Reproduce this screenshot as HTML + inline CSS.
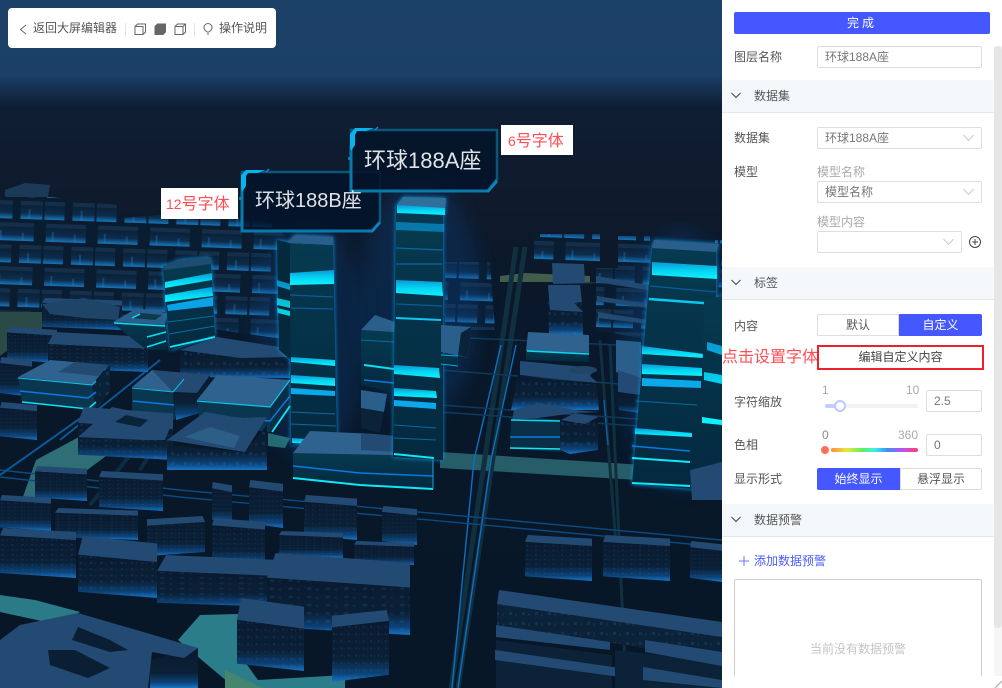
<!DOCTYPE html>
<html lang="zh-CN"><head><meta charset="utf-8"><title>3D</title>
<style>
*{box-sizing:border-box}
html,body{margin:0;padding:0;width:1002px;height:688px;overflow:hidden;background:#fff;font-family:"Liberation Sans","Noto Sans CJK SC",sans-serif;font-size:12px;color:#555}
.a{position:absolute;white-space:nowrap}
#city{position:absolute;left:0;top:0}
.lb{line-height:16px}
.in{position:absolute;border:1px solid #ddd;border-radius:2px;background:#fff;height:22px;line-height:20px;padding-left:7px;color:#777}
.sec{position:absolute;left:722px;width:272px;height:33px;background:#f5f8fb;border-bottom:1px solid #e4e8ee}
.sec span{position:absolute;left:32px;top:8px;line-height:16px;color:#555}
.sec svg{position:absolute;left:9px;top:11px}
.chev{position:absolute;right:7px;top:6px}
.tg{position:absolute;text-align:center;line-height:20px;height:22px;border:1px solid #ddd;background:#fff;color:#555}
.on{background:#4557ff;border-color:#4557ff;color:#fff}
.g{color:#aaa}
.glow{filter:drop-shadow(0 0 2px #0a9ae8)}
</style></head><body>
<svg id="city" width="722" height="688" viewBox="0 0 722 688" xmlns="http://www.w3.org/2000/svg">
<defs>
<linearGradient id="sky" x1="0" y1="0" x2="0" y2="1"><stop offset="0" stop-color="#1c4169"/><stop offset=".11" stop-color="#1b3f67"/><stop offset=".13" stop-color="#15304f"/><stop offset=".155" stop-color="#0f1e33"/><stop offset=".3" stop-color="#0f1a2c"/><stop offset=".45" stop-color="#09182a"/><stop offset="1" stop-color="#071727"/></linearGradient>
<linearGradient id="w" x1="0" y1="0" x2="0" y2="1"><stop offset="0" stop-color="#0a1a30"/><stop offset=".62" stop-color="#0a2036"/><stop offset=".86" stop-color="#0d4278"/><stop offset="1" stop-color="#1874c4"/></linearGradient>
<linearGradient id="fw" x1="0" y1="0" x2="0" y2="1"><stop offset="0" stop-color="#0b2036"/><stop offset=".6" stop-color="#0c2c4c"/><stop offset="1" stop-color="#1877bb"/></linearGradient>
<linearGradient id="tw" x1="0" y1="0" x2="0" y2="1"><stop offset="0" stop-color="#063a50"/><stop offset="1" stop-color="#04293f"/></linearGradient>
<linearGradient id="cy" x1="0" y1="0" x2="0" y2="1"><stop offset="0" stop-color="#0a96d8"/><stop offset=".5" stop-color="#05d4f0"/><stop offset="1" stop-color="#10f2ff"/></linearGradient>
<pattern id="p" width="13" height="10" patternUnits="userSpaceOnUse"><rect x="2" y="2" width="3" height="3" fill="#2f8ad0" opacity=".16"/><rect x="8" y="3" width="2" height="3" fill="#2f8ad0" opacity=".1"/></pattern>
<pattern id="far" width="52" height="44" patternUnits="userSpaceOnUse" patternTransform="rotate(2)">
<rect width="52" height="44" fill="#0a1c30"/>
<rect x="2" y="5" width="40" height="15" fill="url(#fw)"/><rect x="2" y="2" width="40" height="4" fill="#152f4a"/>
<rect x="28" y="27" width="22" height="15" fill="url(#fw)"/><rect x="28" y="24" width="22" height="4" fill="#152f4a"/>
<rect x="0" y="27" width="20" height="15" fill="url(#fw)"/><rect x="0" y="24" width="20" height="4" fill="#152f4a"/>
<rect x="8" y="10" width="2" height="9" fill="#2a8ad8" opacity=".3"/><rect x="30" y="12" width="2" height="7" fill="#2a8ad8" opacity=".3"/><rect x="36" y="32" width="2" height="9" fill="#2a8ad8" opacity=".3"/></pattern>
<g id="h"><path fill="url(#w)" d="M0 15 100 24V100L0 90z"/><path fill="url(#p)" d="M0 15 100 24V100L0 90z"/><path fill="#234a72" d="M4 0 100 8V24L0 15z"/></g>
<g id="k"><path fill="url(#w)" d="M0 24 100 15V90L0 100z"/><path fill="url(#p)" d="M0 24 100 15V90L0 100z"/><path fill="#234a72" d="M0 8 96 0 100 15 0 24z"/></g>
<g id="n"><path fill="url(#w)" d="M0 30 100 42V100L0 90z"/><path fill="url(#p)" d="M0 30 100 42V100L0 90z"/><path fill="#234a72" d="M6 0 100 12V42L0 30z"/></g>
<filter id="bl" x="-50%" y="-50%" width="200%" height="200%"><feGaussianBlur stdDeviation="9"/></filter>
</defs>
<rect width="722" height="688" fill="url(#sky)"/>
<!-- far city -->
<path fill="#1a3a58" d="M5 190 25 183 50 185 48 197 5 197z"/>
<path fill="url(#far)" d="M0 197 50 197 118 205 120 218 200 212 270 222 290 240 290 340 150 320 40 310 0 325z"/>
<path fill="url(#far)" d="M445 262 490 262 495 330 445 330z"/>
<path fill="url(#far)" d="M534 234 600 234 600 262 534 262z"/>
<path fill="url(#far)" d="M618 236 650 236 650 268 618 268z"/>
<path fill="url(#far)" d="M596 268 650 268 650 340 596 330z"/>
<path fill="url(#far)" d="M715 240 722 240 722 300 715 300z"/>
<!-- ground patches -->
<path fill="#2a4a48" d="M0 312 42 312 42 335 8 350 0 356z"/>
<path fill="#2a7a88" d="M0 595 35 600 80 612 60 625 0 612z"/>
<path fill="#2b7d8a" d="M200 615 238 614 240 655 258 680 345 675 345 688 235 688 178 640z"/>
<path fill="#47866e" d="M225 670 262 688 225 688z"/>
<path fill="#3c8c90" d="M36 460 120 415 155 420 60 490 20 505z" opacity=".75"/>
<path fill="#3a8c92" d="M440 452 722 470 722 485 440 468z" opacity=".6"/>
<path fill="#5b7a5c" d="M500 276 525 273 590 276 590 282 500 282z" opacity=".7"/>
<!-- roads -->
<g fill="none">
<path stroke="#10303f" stroke-width="5" d="M516 247 451 688M525 247 458 688"/>
<path stroke="#0e6fc4" stroke-width="1.4" d="M501 345 474 460 452 688M516 345 491 460 458 688"/>
<path stroke="#10303f" stroke-width="3" d="M600 340 618 570M610 345 626 688"/>
<path stroke="#0d5fa8" stroke-width="1.4" d="M604 400 608 445"/>
<path stroke="#103a5c" stroke-width="1.5" d="M470 338 722 350M440 370 722 392M440 405 722 425M440 412 722 432"/>
<path stroke="#0c4a82" stroke-width="1.4" d="M0 470 180 490 722 540M0 477 180 497 722 547"/>
<path stroke="#0d5797" stroke-width="2" d="M0 475 85 415M60 440 160 360"/>
<path stroke="#0d2c44" stroke-width="4" d="M112 350 70 395M140 470 180 405M90 505 130 455"/>
</g>
<ellipse cx="420" cy="300" rx="60" ry="120" fill="#0a4a90" opacity=".28" filter="url(#bl)"/>
<ellipse cx="310" cy="340" rx="55" ry="120" fill="#0a4a90" opacity=".25" filter="url(#bl)"/>
<ellipse cx="680" cy="360" rx="60" ry="130" fill="#0a4a90" opacity=".28" filter="url(#bl)"/>
<!-- mid left -->
<use href="#h" transform="matrix(.8 0 0 .32 42 298)"/>
<use href="#h" transform="matrix(.5 0 0 .36 7 327)"/>
<path fill="#1e4468" d="M42 304 84 298 120 307 118 320 84 318 50 314z"/>
<use href="#n" transform="matrix(1 0 0 .4 48 332)"/>
<use href="#h" transform="matrix(.32 0 0 .4 0 357)"/>
<use href="#h" transform="matrix(.37 0 0 .38 0 402)"/>
<!-- M4 lit -->
<path fill="url(#tw)" d="M113 323 167 325 166 350 147 350 130 337z"/>
<path fill="#2a5f8c" d="M113 322 137 308 167 313 165 325z"/>
<path fill="#0d3a4d" d="M132 318 140 313 162 315 155 320z"/>
<path stroke="#08e0f5" stroke-width="1.5" fill="none" d="M114 323 165 326M132 318 140 314M147 337 166 332M147 347 166 341"/>
<!-- tower C -->
<g class="glow">
<path fill="url(#tw)" d="M163 268 211 262 215 335 170 350z"/>
<path fill="#1e4d72" d="M163 266 180 260 210 257 211 264 164 270z"/>
<path fill="url(#cy)" d="M165 282 212 273 212 280 165 288z"/>
<path fill="url(#cy)" d="M165 295 212 287 213 296 165 302z"/>
<path fill="#0ba2e6" d="M167 305 213 297 213 306 168 311z"/>
<path stroke="#0a6a9c" fill="none" d="M168 322 214 316M169 334 215 326"/>
<path stroke="#10e8f8" stroke-width="1.8" fill="none" d="M170 347 215 337"/>
</g>
<!-- M3/M8 etc -->
<path fill="url(#w)" d="M180 350 290 357 290 378 180 377z"/>
<path fill="url(#p)" d="M180 350 290 357 290 378 180 377z"/>
<path fill="#234a72" d="M180 350 217 337 280 347 290 357 240 358z"/>
<!-- M5 -->
<path fill="#0b3650" d="M18 377 92 385 96 410 22 402z"/>
<path fill="#0a2238" d="M92 385 110 365 110 392 96 410z"/>
<path fill="url(#p)" d="M92 385 110 365 110 392 96 410z"/>
<path fill="#2f628e" d="M18 377 50 360 108 365 92 385z"/>
<path fill="#234a72" d="M58 372 75 362 108 365 98 376z"/>
<path stroke="#0bc8ea" stroke-width="1" fill="none" d="M18 378 92 385 96 381"/>
<path stroke="#0d78e0" stroke-width="1.5" fill="none" d="M20 391 88 398 96 392"/>
<path stroke="#0de4f4" stroke-width="1.5" fill="none" d="M22 402 88 409 96 402"/>
<!-- M6 -->
<path fill="#0b3650" d="M132 388 173 393 175 420 132 412z"/>
<path fill="url(#w)" d="M173 393 197 393 210 375 210 410 176 420z"/>
<path fill="#2f628e" d="M132 387 152 370 184 373 173 392z"/>
<path fill="#234a72" d="M152 370 210 375 197 393 173 392z"/>
<path stroke="#0bc0e6" fill="none" d="M132 388 173 392 184 379"/>
<path stroke="#0d78e0" stroke-width="1.5" fill="none" d="M133 401 174 405"/>
<!-- M7 -->
<path fill="#0b3650" d="M197 401 270 407 270 432 200 425z"/>
<path fill="#0a2d48" d="M270 407 290 380 290 410 270 432z"/>
<path fill="#2f628e" d="M197 400 217 375 290 380 270 407z"/>
<path stroke="#0bc8ea" fill="none" stroke-width="1.2" d="M197 401 270 407 290 380"/>
<path stroke="#0d78e0" stroke-width="1.5" fill="none" d="M211 416 270 421 290 396"/>
<path stroke="#10e8f8" stroke-width="1.8" fill="none" d="M212 426 248 430M272 432 290 406"/>
<!-- M9 -->
<use href="#n" transform="matrix(.95 0 0 .53 78 407)"/>
<path fill="#234a72" d="M78 437 112 407 173 420 165 440 145 440z"/>
<path fill="#0b2338" d="M115 422 126 415 148 420 140 427z"/>
<!-- M10 -->
<path fill="url(#w)" d="M167 445 245 452 267 425 267 470 167 470z"/>
<path fill="url(#p)" d="M167 445 245 452 267 425 267 470 167 470z"/>
<path fill="#234a72" d="M167 440 205 412 240 418 267 417 245 452z"/>
<path fill="#2c5e88" d="M184 437 210 427 240 436 234 448z"/>
<path fill="#37a0a0" d="M268 433 290 438 285 448 268 446z" opacity=".6"/>
<!-- tower B -->
<g class="glow">
<path fill="#05293c" d="M277 240 290 243 291 360 279 350z"/>
<path fill="url(#tw)" d="M290 243 333 245 337 440 291 445z"/>
<path fill="#2a5f8c" d="M288 243 295 235 333 237 333 245z"/>
<path fill="url(#cy)" d="M290 273 334 270 334 284 290 285z"/>
<path stroke="#0c5a9c" stroke-width="1.2" fill="none" d="M290 295 333 297M291 308 333 309"/>
<path fill="url(#cy)" d="M291 357 335 360 335 366 291 362z"/>
<path fill="url(#cy)" d="M291 375 335 378 335 386 291 383z"/>
<path fill="#0ba8ea" d="M291 388 335 391 335 396 291 394z"/>
<path stroke="#0a6a9c" fill="none" d="M291 412 335 414M291 424 336 426"/>
<path fill="url(#cy)" d="M292 438 336 441 336 446 292 443z"/>
<path fill="url(#cy)" d="M277 280 290 284 290 290 277 286zM277 298 290 301 290 308 277 305zM277 308 290 311 290 316 278 313z" opacity=".85"/>
</g>
<!-- podium -->
<path fill="url(#tw)" d="M293 452 433 456 433 490 293 478z"/>
<path fill="#2f628e" d="M293 453 310 431 375 434 433 440 433 456z"/>
<path stroke="#0d78e0" stroke-width="1.5" fill="none" d="M293 466 360 473 433 476"/>
<path stroke="#10e8f8" stroke-width="2" fill="none" d="M293 478 360 485 433 489"/>
<path stroke="#10a8d8" fill="none" d="M433 458 433 489"/>
<!-- cluster left of tower A -->
<path fill="url(#tw)" d="M361 330 394 332 394 393 361 385z"/>
<path fill="#2a5f8c" d="M361 330 375 315 395 322 394 332z"/>
<path stroke="#0a6a9c" fill="none" d="M361 340 394 342"/>
<path stroke="#0ce0f4" stroke-width="2" fill="none" d="M364 365 394 369"/>
<path stroke="#0d78e0" stroke-width="1.5" fill="none" d="M364 380 394 383"/>
<path fill="#2a5f8c" d="M361 390 387 394 384 412 361 408z"/>
<path fill="#0b2338" d="M361 408 384 412 380 433 361 428z"/>
<path fill="#234a72" d="M361 433 395 436 395 452 361 450z"/>
<!-- tower A -->
<g class="glow">
<path fill="url(#tw)" d="M396 205 443 208 443 460 393 457z"/>
<path fill="#2f6f9a" d="M397 205 403 197 446 198 445 208z"/>
<path fill="url(#cy)" d="M397 205 445 208 445 215 397 213z"/>
<path fill="#0aa2e6" d="M396 222 444 224 444 232 396 230z" opacity=".6"/>
<path stroke="#0a6a9c" stroke-width="1.2" fill="none" d="M396 248 443 250M396 264 442 264"/>
<path fill="url(#cy)" d="M396 280 442 282 443 296 396 293z"/>
<path stroke="#0c5a9c" stroke-width="1.2" fill="none" d="M396 304 442 306"/>
<path stroke="#0cc8f0" stroke-width="2" fill="none" d="M396 318 441 320"/>
<path fill="url(#cy)" d="M394 365 439 368 440 378 394 374z"/>
<path fill="url(#cy)" d="M394 388 436 391 437 398 394 396z"/>
<path fill="#0ba8ea" d="M394 400 436 403 436 409 394 406z"/>
<path stroke="#0a6a9c" fill="none" d="M394 425 436 428M394 438 436 440"/>
<path stroke="#10e8f8" stroke-width="2" fill="none" d="M394 454 434 458"/>
</g>
<!-- R-d -->
<path fill="#2a5f8c" d="M441 325 471 327 468 358 441 352z"/>
<path fill="#0b2338" d="M461 333 471 327 468 358 458 355z"/>
<path fill="url(#tw)" d="M441 354 458 356 458 366 441 364z"/>
<path stroke="#0ba8e0" fill="none" d="M441 355 458 356M441 364 458 366"/>
<!-- center -->
<path fill="#234a72" d="M552 263 584 264 585 282 600 283 553 284z"/>
<path fill="url(#w)" d="M548 300 583 302 583 335 549 333z"/>
<path fill="url(#p)" d="M548 300 583 302 583 335 549 333z"/>
<path fill="#234a72" d="M548 285 580 285 582 302 574 303 583 312 550 310z"/>
<path fill="#2f628e" d="M528 332 589 335 589 353 526 351z"/>
<path fill="url(#tw)" d="M526 351 589 354 589 362 526 360z"/>
<path stroke="#0bd8f0" stroke-width="1.4" fill="none" d="M527 351 589 354"/>
<path fill="url(#w)" d="M518 375 597 385 599 410 511 410z"/>
<path fill="url(#p)" d="M518 375 597 385 599 410 511 410z"/>
<path fill="#234a72" d="M520 361 595 368 590 376 598 383 520 375z"/>
<ellipse cx="583" cy="370" rx="14" ry="4" fill="#1f4568"/>
<path fill="#0b2f46" d="M511 420 561 420 561 452 510 449z"/>
<path fill="#234a72" d="M514 410 540 403 575 410 599 412 575 413 538 418 512 420z"/>
<path stroke="#0ad8f0" stroke-width="1.4" fill="none" d="M511 420 560 421"/>
<path stroke="#0d78e0" stroke-width="1.5" fill="none" d="M510 437 560 437"/>
<path stroke="#10e8f8" stroke-width="1.5" fill="none" d="M510 448 560 449"/>
<path fill="url(#w)" d="M560 420 598 418 598 450 570 454 560 450z"/>
<path fill="url(#p)" d="M560 420 598 418 598 450 570 454 560 450z"/>
<path fill="#234a72" d="M561 420 575 413 598 417 585 424z"/>
<!-- mid right -->
<path fill="#2a5f8c" d="M616 340 641 342 641 380 616 372z"/>
<path fill="#234a72" d="M618 370 641 378 640 395 618 392z"/>
<path fill="url(#w)" d="M617 392 640 395 640 413 619 410z"/>
<path fill="#234a72" d="M596 276 648 285 648 290 596 282zM597 296 648 304 648 308 597 301zM598 312 648 320 648 324 598 318z"/>
<!-- right tower -->
<g class="glow">
<path fill="url(#tw)" d="M652 248 716 250 716 430 707 490 632 484z"/>
<path fill="#2a5f8c" d="M654 240 719 244 716 252 652 248z"/>
<path fill="url(#cy)" d="M652 262 717 266 717 279 652 275z"/>
<path stroke="#0c5a9c" stroke-width="1.2" fill="none" d="M650 286 716 292"/>
<path stroke="#0cc8f0" stroke-width="2.4" fill="none" d="M649 299 716 304"/>
<path fill="url(#cy)" d="M642 346 704 354 704 358 642 354z"/>
<path fill="url(#cy)" d="M642 364 702 368 702 376 642 374z"/>
<path fill="#0ba8ea" d="M642 378 701 381 701 388 642 386z"/>
<path stroke="#0a6a9c" fill="none" d="M636 401 697 405"/>
<path fill="url(#cy)" d="M635 428 692 433 692 437 635 434z"/>
<path stroke="#0d78e0" stroke-width="1.5" fill="none" d="M632 446 690 451"/>
<path stroke="#10e8f8" stroke-width="2" fill="none" d="M632 458 690 462M632 483 690 486"/>
<path fill="url(#tw)" d="M704 300 722 296 722 470 700 480z"/>
<path fill="url(#cy)" d="M707 342 722 346 722 355 707 350zM704 372 722 375 722 384 704 380zM702 417 722 420 722 425 702 423z"/>
</g>
<path fill="#234a72" d="M690 470 722 462 722 500 692 500z"/>
<!-- lower left rows -->
<use href="#h" transform="matrix(.52 0 0 .35 35 466)"/>
<use href="#h" transform="matrix(.64 0 0 .4 99 471)"/>
<use href="#h" transform="matrix(.34 0 0 .48 249 480)"/>
<use href="#h" transform="matrix(.2 0 0 .42 212 482)"/>
<use href="#h" transform="matrix(.53 0 0 .45 304 495)"/>
<use href="#h" transform="matrix(.35 0 0 .39 382 506)"/>
<use href="#h" transform="matrix(.51 0 0 .36 0 495)"/>
<use href="#h" transform="matrix(.83 0 0 .32 55 508)"/>
<use href="#k" transform="matrix(.58 0 0 .4 147 516)"/>
<use href="#h" transform="matrix(.53 0 0 .48 212 518)"/>
<use href="#h" transform="matrix(.76 0 0 .5 0 528)"/>
<use href="#h" transform="matrix(.64 0 0 .27 279 531)"/>
<use href="#h" transform="matrix(.6 0 0 .24 354 541)"/>
<use href="#n" transform="matrix(.79 0 0 .62 78 536)"/>
<use href="#n" transform="matrix(1.52 0 0 .53 157 555)"/>
<use href="#n" transform="matrix(1.43 0 0 .82 267 553)"/>
<use href="#n" transform="matrix(.67 0 0 .73 237 598)"/>
<use href="#k" transform="matrix(.57 0 0 .72 332 610)"/>
<!-- big lower left -->
<path fill="url(#w)" d="M150 660 198 648 198 688 150 688z"/>
<path fill="#234a72" d="M0 640 20 625 78 613 198 648 184 658 152 652 148 688 0 688z"/>
<path fill="#0a1f34" d="M78 627 110 640 128 650 110 652 72 640z"/>
<path fill="#0a1f34" d="M48 650 75 650 110 668 88 678 50 665z"/>
<!-- lower right -->
<use href="#h" transform="matrix(.67 0 0 .46 525 535)"/>
<use href="#h" transform="matrix(.67 0 0 .46 603 535)"/>
<use href="#h" transform="matrix(.32 0 0 .41 690 541)"/>
<path fill="#0b2238" d="M497 604 722 635 722 660 497 625z"/>
<path fill="url(#p)" d="M497 604 722 635 722 660 497 625z"/>
<path fill="#234a72" d="M499 590 722 622 722 637 497 604z"/>
<path fill="#0b2238" d="M496 640 612 655 612 688 496 688z"/>
<path fill="#234a72" d="M496 625 610 642 610 650 496 637z"/>
<path fill="#234a72" d="M495 650 620 668 620 677 495 660z"/>
<path fill="#0b2238" d="M615 650 722 662 722 688 615 688z"/>
<path fill="#234a72" d="M645 640 722 652 722 666 645 652z"/>
<path fill="#234a72" d="M643 667 722 680 722 688 643 680z"/>
<!-- labels: dim top edge, brighter lower edge -->
<path d="M242 172H380V222L372 231H242z" fill="#03142a" fill-opacity=".82"/>
<path d="M242 187V172H380V222" fill="none" stroke="#0a5578" stroke-width="2.500"/>
<path d="M380 222 372 231H242V187" fill="none" stroke="#0a7aac" stroke-width="3"/>
<path d="M241 187V175L246 170H265L258 173H248L246 176V186L242 192z" fill="#08b4ee"/>
<path stroke="#0a8cc4" stroke-width="1.5" d="M266 172 269 169M240 200V197M372 232 380 223" fill="none"/>
<path d="M351 130H497V180L488 191H351z" fill="#03142a" fill-opacity=".86"/>
<path d="M351 146V130H497V180" fill="none" stroke="#0a5578" stroke-width="2.500"/>
<path d="M497 180 488 191H351V146" fill="none" stroke="#0a7aac" stroke-width="3"/>
<path d="M350 146V134L355 128H374L366 131H357L355 135V145L351 151z" fill="#08b4ee"/>
<path stroke="#0a8cc4" stroke-width="1.5" d="M375 130 378 127M349 160V157M488 192 497 182" fill="none"/>
</svg>
<div class="a" style="left:364px;top:145px;font-size:22px;line-height:32px;color:#dfe3e8">环球188A座</div>
<div class="a" style="left:255px;top:186px;font-size:20px;line-height:30px;color:#dfe3e8">环球188B座</div>
<div class="a" style="left:161px;top:188px;width:77px;height:31px;background:#fff"></div>
<div class="a" style="left:166px;top:194px;font-size:16px;line-height:20px;color:#ff4d55"><span style="font-size:14px">12</span>号字体</div>
<div class="a" style="left:501px;top:125px;width:72px;height:30px;background:#fff"></div>
<div class="a" style="left:508px;top:131px;font-size:16px;line-height:20px;color:#ff4d55"><span style="font-size:14px">6</span>号字体</div>
<!-- toolbar -->
<div class="a" style="left:8px;top:8px;width:268px;height:40px;background:#fff;border-radius:4px"></div>
<svg class="a" style="left:8px;top:8px" width="268" height="40" fill="none" stroke="#666" stroke-width="1">
<path d="M18 17 12.500 21.500 18 26"/>
<path d="M117.500 15V29M186.500 15V29" stroke="#e6e6e6"/>
<path d="M127 18.500H135V26.500H127zM127 18.500 129.500 16H137.500V24L135 26.500"/>
<path d="M147 18.500 149.500 16H157.500V24L155 26.500H147z" fill="#666"/>
<path d="M167 18.500H175V26.500H167zM167 18.500 169.500 16H177.500V24L175 26.500M175 18.500 177.500 16"/>
<path d="M199 24C196.500 22 196 20.800 196 19.500A4 4 0 0 1 204 19.500C204 20.800 203.500 22 201 24zM199 26H201"/>
</svg>
<div class="a lb" style="left:33px;top:20px;color:#555">返回大屏编辑器</div>
<div class="a lb" style="left:219px;top:20px;color:#555">操作说明</div>
<!-- panel -->
<div class="a" style="left:722px;top:0;width:280px;height:688px;background:#fff"></div>
<div class="a" style="left:994px;top:46px;width:8px;height:630px;background:#f6f6f6"></div>
<div class="a" style="left:994px;top:46px;width:8px;height:582px;background:#e6e6e6;border-radius:4px 4px 3px 3px"></div>
<div class="a" style="left:734px;top:12px;width:256px;height:22px;background:#4557ff;border-radius:2px;color:#fff;text-align:center;line-height:22px;letter-spacing:3px">完成</div>
<div class="a lb" style="left:734px;top:49px">图层名称</div>
<div class="in" style="left:817px;top:46px;width:165px">环球188A座</div>
<div class="sec" style="top:80px"><svg width="10" height="10" fill="none" stroke="#444"><path d="M.5 2 5 6.500 9.500 2"/></svg><span>数据集</span></div>
<div class="a lb" style="left:734px;top:130px">数据集</div>
<div class="in" style="left:817px;top:127px;width:165px">环球188A座<svg class="chev" width="11" height="8" fill="none" stroke="#ccc"><path d="M.5 1 5.500 6.500 10.500 1"/></svg></div>
<div class="a lb" style="left:734px;top:164px">模型</div>
<div class="a lb g" style="left:817px;top:164px">模型名称</div>
<div class="in" style="left:817px;top:181px;width:165px">模型名称<svg class="chev" width="11" height="8" fill="none" stroke="#ccc"><path d="M.5 1 5.500 6.500 10.500 1"/></svg></div>
<div class="a lb g" style="left:817px;top:214px">模型内容</div>
<div class="in" style="left:817px;top:231px;width:145px"><svg class="chev" width="11" height="8" fill="none" stroke="#ccc"><path d="M.5 1 5.500 6.500 10.500 1"/></svg></div>
<svg class="a" style="left:968px;top:235px" width="14" height="14" fill="none" stroke="#444"><circle cx="7" cy="7" r="5.500"/><path d="M7 4V10M4 7H10"/></svg>
<div class="sec" style="top:267px"><svg width="10" height="10" fill="none" stroke="#444"><path d="M.5 2 5 6.500 9.500 2"/></svg><span>标签</span></div>
<div class="a lb" style="left:734px;top:318px">内容</div>
<div class="tg" style="left:817px;top:314px;width:82px;border-radius:2px 0 0 2px">默认</div>
<div class="tg on" style="left:899px;top:314px;width:83px;border-radius:0 2px 2px 0">自定义</div>
<div class="a" style="left:722px;top:348px;font-size:16px;line-height:20px;color:#ff4d55">点击设置字体</div>
<div class="a" style="left:817px;top:345px;width:167px;height:25px;border:2px solid #f0202a;text-align:center;line-height:21px;color:#444;background:#fff">编辑自定义内容</div>
<div class="a lb" style="left:734px;top:394px">字符缩放</div>
<div class="a lb g" style="left:822px;top:382px">1</div>
<div class="a lb g" style="left:906px;top:382px">10</div>
<div class="a" style="left:825px;top:404px;width:93px;height:4px;background:#f2f2f2;border-radius:2px"></div>
<div class="a" style="left:825px;top:404px;width:15px;height:4px;background:#c3cdff;border-radius:2px"></div>
<div class="a" style="left:834px;top:400px;width:12px;height:12px;background:#fff;border:2px solid #bcc8ff;border-radius:50%"></div>
<div class="in" style="left:926px;top:390px;width:56px;padding-left:7px">2.5</div>
<div class="a lb" style="left:734px;top:437px">色相</div>
<div class="a lb" style="left:822px;top:427px;color:#888">0</div>
<div class="a lb g" style="left:898px;top:427px">360</div>
<div class="a" style="left:831px;top:448px;width:87px;height:4px;border-radius:2px;background:linear-gradient(90deg,#ff8a3c,#e8e83c 18%,#5cf060 36%,#3cf0e8 50%,#3c90f0 65%,#c050f0 82%,#ff4070)"></div>
<div class="a" style="left:821px;top:446px;width:8px;height:8px;border-radius:50%;background:#ff7256"></div>
<div class="in" style="left:926px;top:434px;width:56px;padding-left:7px">0</div>
<div class="a lb" style="left:734px;top:471px">显示形式</div>
<div class="tg on" style="left:817px;top:468px;width:83px;border-radius:2px 0 0 2px">始终显示</div>
<div class="tg" style="left:900px;top:468px;width:82px;border-radius:0 2px 2px 0">悬浮显示</div>
<div class="sec" style="top:504px"><svg width="10" height="10" fill="none" stroke="#444"><path d="M.5 2 5 6.500 9.500 2"/></svg><span>数据预警</span></div>
<svg class="a" style="left:739px;top:556px" width="10" height="10" stroke="#6a7aff" fill="none"><path d="M5 0V10M0 5H10"/></svg>
<div class="a lb" style="left:754px;top:553px;color:#4a5cff">添加数据预警</div>
<div class="a" style="left:734px;top:579px;width:248px;height:97px;border:1px solid #ccc;border-bottom:0;border-radius:2px 2px 0 0;background:#fff"></div>
<div class="a lb" style="left:810px;top:641px;color:#c4c4c4">当前没有数据预警</div>
<svg class="a" style="left:994px;top:680px" width="8" height="8" fill="none" stroke="#bbb" stroke-width="1.500"><path d="M1 8 8 1"/></svg>
</body></html>
